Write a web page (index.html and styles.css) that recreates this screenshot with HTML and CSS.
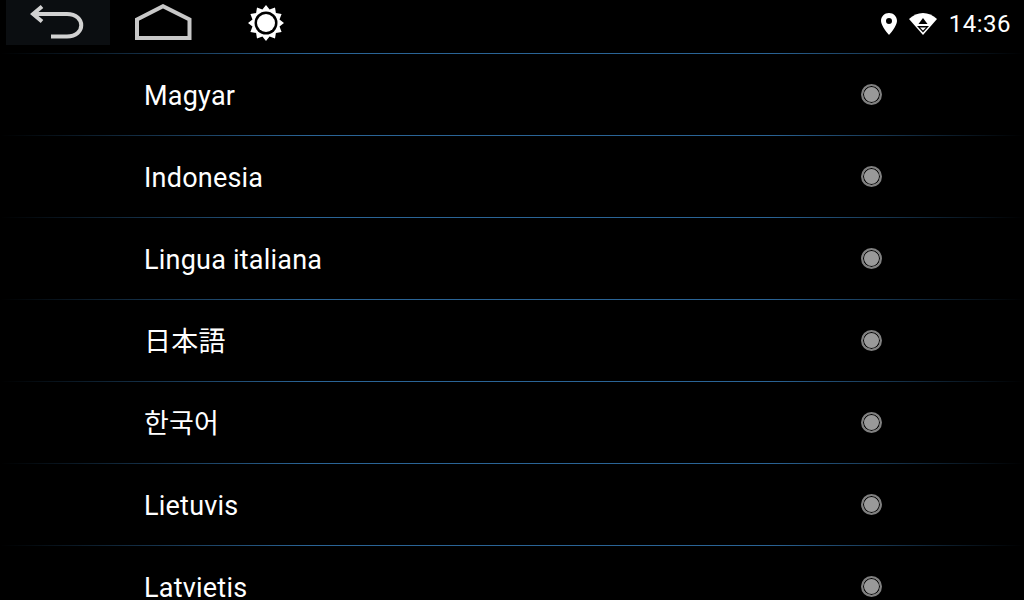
FILE: index.html
```html
<!DOCTYPE html>
<html lang="en">
<head>
    <meta charset="UTF-8">
    <meta name="viewport" content="width=device-width, initial-scale=1.0">
    <title>Language</title>
    <link rel="stylesheet" href="styles.css">
</head>
<body>
    <!-- Status bar -->
    <div class="status-bar">
        <div class="nav-back">
            <svg width="56" height="36" viewBox="0 0 56 36" fill="none" stroke="#d2d2d2" stroke-width="4">
                <path d="M3 11H37C56 11 56 33.500 37 33.500H21"/>
                <path d="M12 3.500L3 11L12 18.500"/>
            </svg>
        </div>
        <div class="nav-home">
            <svg width="58" height="36" viewBox="0 0 58 36" fill="none" stroke="#c8c8c8" stroke-width="4">
                <path d="M3 15.500L29 2.200L55.500 15.500V34H3Z"/>
            </svg>
        </div>
        <div class="nav-bright">
            <svg width="36" height="38" viewBox="0 0 36 38" fill="#fff">
                <path d="M18 1L21.600 5.500L27 3.400L27.900 9.100L33.600 10L31.500 15.400L36 19L31.500 22.600L33.600 28L27.900 28.900L27 34.600L21.600 32.500L18 37L14.400 32.500L9 34.600L8.100 28.900L2.400 28L4.500 22.600L0 19L4.500 15.400L2.400 10L8.100 9.100L9 3.400L14.400 5.500Z"/>
                <circle cx="18" cy="19" r="11.500" fill="#000"/>
                <circle cx="18" cy="19" r="9"/>
            </svg>
        </div>
        <div class="status-right">
            <svg width="16" height="22" viewBox="0 0 16 22" fill="#fff">
                <path fill-rule="evenodd" d="M8 0C3.500 0 0 3.500 0 8C0 13 8 22 8 22C8 22 16 13 16 8C16 3.500 12.500 0 8 0ZM8 5A3 3 0 1 1 8 11A3 3 0 1 1 8 5Z"/>
            </svg>
            <svg class="wifi" width="28" height="22" viewBox="0 0 28 22" fill="#fff">
                <path d="M0 6C8 -2 20 -2 28 6L14 22Z"/>
                <path d="M14 5L18.500 11H9.500Z" fill="#000"/>
                <path d="M8 13H20L14 19.500Z" fill="#000"/>
                <path d="M11 14.500H17L14 17.500Z" fill="#fff"/>
            </svg>
            <span class="clock">14:36</span>
        </div>
    </div>

    <!-- Language list -->
    <div class="lang-list">
        <div class="lang-row"><span class="lang-name">Magyar</span><span class="radio"></span></div>
        <div class="lang-row"><span class="lang-name">Indonesia</span><span class="radio"></span></div>
        <div class="lang-row"><span class="lang-name">Lingua italiana</span><span class="radio"></span></div>
        <div class="lang-row"><span class="lang-name" lang="ja">日本語</span><span class="radio"></span></div>
        <div class="lang-row"><span class="lang-name" lang="ko">한국어</span><span class="radio"></span></div>
        <div class="lang-row"><span class="lang-name">Lietuvis</span><span class="radio"></span></div>
        <div class="lang-row"><span class="lang-name">Latvietis</span><span class="radio"></span></div>
    </div>
</body>
</html>
```

FILE: styles.css
```css
html, body {
    height: 100%;
}

body {
    margin: 0;
    background: #000;
    color: #fff;
    font-family: Roboto, "Noto Sans CJK JP", sans-serif;
    overflow: hidden;
}

.status-bar {
    display: flex;
    align-items: flex-start;
    height: 53px;
}

.nav-back {
    display: flex;
    justify-content: center;
    width: 104px;
    height: 45px;
    margin-left: 6px;
    padding-top: 3px;
    box-sizing: border-box;
    background: #0b0e11;
}

.nav-home {
    margin: 4px 0 0 24px;
}

.nav-bright {
    margin: 4px 0 0 56px;
}

.status-right {
    display: flex;
    align-items: center;
    margin-left: auto;
    padding: 11px 13px 0 0;
}

.wifi {
    margin-left: 12px;
}

.clock {
    margin-left: 12px;
    font-size: 24px;
    line-height: 26px;
    letter-spacing: 0.5px;
}

.lang-row {
    display: flex;
    align-items: center;
    justify-content: space-between;
    height: 82px;
    padding: 0 142px 0 144px;
    box-sizing: border-box;
    position: relative;
}

.lang-row::before {
    content: "";
    position: absolute;
    left: 0;
    right: 0;
    top: 0;
    height: 1px;
    background: linear-gradient(to right, #000, #2a6496 30%, #2a6496 75%, #000);
}

.lang-name {
    font-size: 27px;
    line-height: 32px;
    padding-top: 3px;
    letter-spacing: 0.22px;
}

.radio {
    width: 21px;
    height: 21px;
    box-sizing: border-box;
    border: 2px solid #808080;
    border-radius: 50%;
    background: #999;
    box-shadow: inset 0 0 0 1px #000;
    margin-top: 1px;
}
```
